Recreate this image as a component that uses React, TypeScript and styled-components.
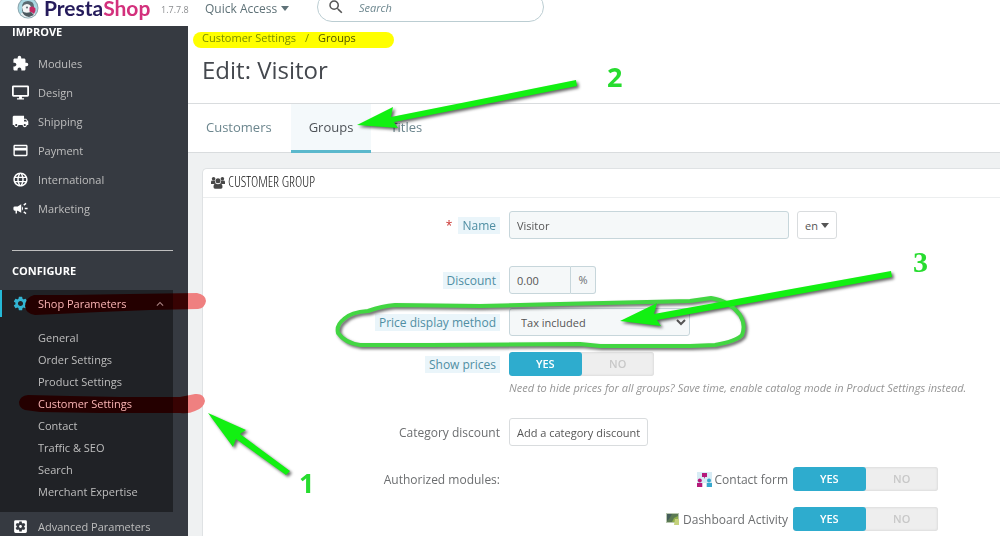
import React from 'react';
import styled, { createGlobalStyle } from 'styled-components';
import { MdExtension, MdLocalShipping, MdCreditCard, MdLanguage, MdSettings, MdSettingsApplications, MdSearch, MdExpandLess } from 'react-icons/md';

const GlobalStyle = createGlobalStyle`
  *, *::before, *::after { box-sizing: border-box; }
  body { margin: 0; overflow: hidden; background: #fff; }
  body, button, input, select { font-family: 'Open Sans', sans-serif; font-size: 12px; }
  a { color: inherit; text-decoration: none; }
  ul { list-style: none; margin: 0; padding: 0; }
`;

const Page = styled.div`
  position: relative;
  min-height: 100vh;
  max-height: 100vh;
  overflow: hidden;
  isolation: isolate;
  color: #6c6e70;
`;

const TopBar = styled.header`
  display: flex;
  align-items: flex-start;
  height: 26px;
  padding-left: 17px;
`;

const Brand = styled.a`
  display: flex;
  gap: 5px;
  width: 144px;
  font: 700 21px/16px Lato, sans-serif;
  color: #251b5b;
  svg { flex: none; margin-top: -3px; }
`;

const Shop = styled.span`
  color: #d3307c;
`;

const Version = styled.span`
  width: 44px;
  font-size: 9px;
  line-height: 20px;
  color: #8a8c8f;
`;

const QuickAccess = styled.button`
  display: flex;
  align-items: center;
  gap: 4px;
  width: 112px;
  height: 16px;
  padding: 0;
  border: 0;
  background: none;
  color: #5f7278;
`;

const SearchBox = styled.label`
  display: flex;
  align-items: center;
  gap: 14px;
  width: 227px;
  height: 30px;
  margin-top: -8px;
  padding: 0 9px;
  border: 1px solid #bbcdd2;
  border-radius: 15px;
  svg { flex: none; color: #555; }
  input {
    width: 100%;
    padding: 0;
    border: 0;
    outline: 0;
    background: none;
    font-size: 11px;
    font-style: italic;
  }
  input::placeholder { color: #6c868e; opacity: 1; }
`;

const Body = styled.div`
  display: flex;
  align-items: stretch;
`;

const Sidebar = styled.nav`
  flex: none;
  width: 188px;
  min-height: calc(100vh - 26px);
  font-size: 11px;
  background: #363a41;
  color: #bebebe;
`;

const SectionTitle = styled.h2`
  margin: 0;
  padding-left: 12px;
  font-size: 11px;
  font-weight: 700;
  line-height: 12px;
  color: #fff;
`;

const MainMenu = styled.ul`
  padding-top: 11px;
`;

const MenuLink = styled.a`
  display: flex;
  align-items: center;
  gap: 9px;
  height: 29px;
  padding-left: 12px;
  svg { flex: none; color: #fff; }
`;

const Divider = styled.hr`
  width: 161px;
  height: 1px;
  margin: 27px 0 14px 12px;
  border: 0;
  background: #bebebe;
`;

const OpenGroup = styled.div`
  width: 173px;
  height: 222px;
  margin-top: 13px;
  background: #202226;
`;

const OpenLink = styled(MenuLink)`
  height: 27px;
  padding-left: 10px;
  border-left: 2px solid #25b9d7;
  & > svg:first-child { color: #33b5d3; }
`;

const Marked = styled.span`
  position: relative;
  z-index: 2;
  flex: 1;
  color: #fbb4b4;
`;

const GroupArrow = styled.span`
  position: relative;
  z-index: 2;
  display: flex;
  padding-right: 6px;
  && svg { color: #a98080; }
`;

const SubMenu = styled.ul`
  padding: 10px 0 0 38px;
`;

const SubItem = styled.li`
  height: 22px;
  line-height: 22px;
`;

const Main = styled.main`
  flex: 1;
  min-width: 0;
  background: #eff1f2;
`;

const PageHead = styled.div`
  height: 127px;
  background: #fff;
  border-bottom: 1px solid #d9dcde;
`;

const Breadcrumb = styled.nav`
  display: flex;
  gap: 9px;
  height: 26px;
  padding: 4px 0 0 14px;
  font-size: 11px;
  line-height: 16px;
  color: #7b8f78;
  span { color: #50535a; }
`;

const Title = styled.h1`
  margin: 0;
  padding: 1px 0 0 14px;
  height: 51px;
  font-size: 24px;
  font-weight: 400;
  line-height: 34px;
  color: #44484e;
`;

const Tabs = styled.div`
  display: flex;
  gap: 1px;
  border-top: 1px solid #d9dcde;
`;

const Tab = styled.a<{ $active?: boolean }>`
  height: 49px;
  padding: 0 18px;
  font-size: 13px;
  line-height: 47px;
  color: ${p => (p.$active ? '#4d5257' : '#6c868e')};
  background: ${p => (p.$active ? '#f4f9fb' : 'transparent')};
  border-bottom: 3px solid ${p => (p.$active ? '#5bb8cc' : 'transparent')};
`;

const Panel = styled.section`
  margin: 15px 0 0 14px;
  min-height: 400px;
  background: #fff;
  border: 1px solid #dfe2e4;
  border-right: 0;
  border-top-left-radius: 5px;
`;

const PanelTitle = styled.h3`
  display: flex;
  align-items: center;
  gap: 3px;
  height: 29px;
  margin: 0 0 13px;
  padding: 0 0 2px 8px;
  border-bottom: 1px solid #eceeef;
  font: 300 14px/26px 'Open Sans Condensed Light', 'Open Sans Condensed', 'Open Sans', sans-serif;
  color: #111;
`;

const Row = styled.div<{ $gap?: number }>`
  display: grid;
  grid-template-columns: 297px 1fr;
  align-items: start;
  column-gap: 9px;
  margin-bottom: ${p => p.$gap ?? 14}px;
`;

const LabelCell = styled.div<{ $low?: boolean }>`
  display: flex;
  justify-content: flex-end;
  align-items: center;
  gap: 6px;
  height: ${p => (p.$low ? 24 : 28)}px;
`;

const Label = styled.label<{ $hint?: boolean }>`
  padding: 0 ${p => (p.$hint ? 4 : 0)}px;
  line-height: 17px;
  color: ${p => (p.$hint ? '#4f8ea3' : '#6c6e70')};
  background: ${p => (p.$hint ? '#eaf5fa' : 'transparent')};
`;

const Star = styled.span`
  color: #c9302c;
`;

const Fields = styled.div`
  display: flex;
  flex-wrap: wrap;
  column-gap: 8px;
`;

const TextInput = styled.input<{ $width: number }>`
  width: ${p => p.$width}px;
  height: 28px;
  padding: 0 7px;
  font-size: 11px;
  color: #555;
  background: #f5f8f9;
  border: 1px solid #c7d6db;
  border-radius: 3px;
`;

const InputGroup = styled.div`
  display: flex;
  input { border-radius: 3px 0 0 3px; }
`;

const Unit = styled.span`
  width: 25px;
  height: 28px;
  font-size: 11px;
  line-height: 26px;
  text-align: center;
  background: #f5f8f9;
  border: 1px solid #c7d6db;
  border-left: 0;
  border-radius: 0 3px 3px 0;
`;

const PlainButton = styled.button`
  display: flex;
  align-items: center;
  gap: 3px;
  height: 28px;
  padding: 0 7px;
  font-size: 11px;
  color: #555;
  background: #fff;
  border: 1px solid #d9dcde;
  border-radius: 3px;
`;

const Select = styled.select`
  width: 181px;
  height: 28px;
  padding: 0 0 0 7px;
  font-size: 11px;
  color: #555;
  background: #f5f8f9;
  border: 1px solid #c7d6db;
  border-radius: 3px;
`;

const Switch = styled.div`
  display: flex;
  width: 145px;
  height: 24px;
  background: #eee;
  border-radius: 3px;
  box-shadow: inset 0 0 2px 1px #ddd;
  overflow: hidden;
`;

const Choice = styled.label`
  flex: 1;
  font-size: 11px;
  font-weight: 600;
  line-height: 24px;
  text-align: center;
  color: #c8c8c8;
  border-radius: 3px;
  input { position: absolute; opacity: 0; pointer-events: none; }
  &:has(input:checked) { background: #2eacce; color: #fff; }
`;

const Help = styled.p`
  width: 100%;
  margin: 0;
  padding-top: 3px;
  font-size: 11px;
  font-style: italic;
  line-height: 17px;
  color: #959595;
`;

const Modules = styled.ul`
  width: 429px;
  margin-top: 2px;
`;

const ModuleItem = styled.li`
  display: flex;
  justify-content: flex-end;
  align-items: center;
  height: 24px;
  margin-bottom: 16px;
`;

const ModuleName = styled.span`
  display: flex;
  align-items: center;
  gap: 3px;
  padding-right: 5px;
`;

const Overlay = styled.svg`
  position: absolute;
  z-index: 1;
  top: 0;
  left: 0;
  pointer-events: none;
`;

const Blended = styled(Overlay)`
  mix-blend-mode: multiply;
`;

const Front = styled(Overlay)`
  z-index: 3;
  text { font-weight: 700; fill: #27dc2f; }
`;

const Caret = () => (
  <svg width="8" height="5" viewBox="0 0 8 5" fill="currentColor"><path d="M0 0H8L4 5Z" /></svg>
);

const Puffin = () => (
  <svg width="22" height="22" viewBox="0 0 22 22">
    <defs><clipPath id="disc"><circle cx="11" cy="11" r="9.5" /></clipPath></defs>
    <circle cx="11" cy="11" r="10.5" fill="#8fa9b1" />
    <g clipPath="url(#disc)">
      <circle cx="11" cy="11" r="10" fill="#a9d8e2" />
      <path d="M5 14L5 10Q5 4 11 4Q17 4 17 10L17 14Z" fill="#5b6a70" />
      <path d="M5 10Q8 6 12 7.5Q15 9 14 15Q9 18 6 14Z" fill="#f4f6f6" />
      <path d="M2 22Q3 15 7 15L11 18L18 16V22Z" fill="#e8eef0" />
      <path d="M5 14Q8 17 14 15L17 18L12 20Q6 19 5 14Z" fill="#4c595f" />
      <path d="M12.5 10.5Q16 8 18.5 11.5Q19 14 17 17Q15.5 15 12.5 14.5Z" fill="#c22b64" />
      <circle cx="10" cy="10.5" r="1.1" fill="#6c787d" />
    </g>
  </svg>
);

const Monitor = () => (
  <svg width="17" height="17" viewBox="0 0 24 24" fill="#fff" fillRule="evenodd">
    <path d="M2 2H22Q24 2 24 4V16Q24 18 22 18H14V20H17V22H7V20H10V18H2Q0 18 0 16V4Q0 2 2 2ZM2.5 4.5V15.5H21.5V4.5Z" />
  </svg>
);

const Megaphone = () => (
  <svg width="17" height="17" viewBox="0 0 24 24" fill="currentColor">
    <path d="M18 11v2h4v-2h-4zm-2 6.61c.96.71 2.21 1.65 3.2 2.39l1.2-1.6-3.2-2.4-1.2 1.61zM20.4 5.6 19.2 4l-3.2 2.4 1.2 1.6 3.2-2.4zM4 9a2 2 0 0 0-2 2v2a2 2 0 0 0 2 2h1v4h2v-4h1l5 3V6L8 9H4zm11.5 3a4.5 4.5 0 0 0-1.5-3.35v6.69A4.5 4.5 0 0 0 15.5 12z" />
  </svg>
);

const People = () => (
  <svg width="14" height="13" viewBox="0 0 14 13" fill="#484848">
    <circle cx="2.6" cy="2.7" r="1.8" /><circle cx="11.4" cy="2.7" r="1.8" />
    <path d="M0 8V6Q0 4.6 1.4 4.6H4Q3.5 6.5 5 7.3L3.5 8ZM14 8V6Q14 4.6 12.6 4.6H10Q10.5 6.5 9 7.3L10.5 8Z" />
    <circle cx="7" cy="4.8" r="2.5" />
    <path d="M2.5 11Q2.5 7.6 4.8 7.4Q7 9 9.2 7.4Q11.5 7.6 11.5 11Q11.5 12.8 10 12.8H4Q2.5 12.8 2.5 11Z" />
  </svg>
);

const ContactIcon = () => (
  <svg width="15" height="15" viewBox="0 0 15 15">
    <rect width="15" height="15" fill="#d8ecf5" />
    <path d="M5 1H10V5H8L7 7V5H5Z" fill="#b5197a" />
    <circle cx="2.8" cy="8.5" r="2" fill="#b5197a" /><path d="M0 15V11H5.5V15Z" fill="#b5197a" />
    <circle cx="12" cy="8.5" r="2" fill="#38a8cd" /><path d="M9.5 15V11H15V15Z" fill="#38a8cd" />
    <path d="M5.5 11H9.5V15H5.5Z" fill="#fff" />
  </svg>
);

const ActivityIcon = () => (
  <svg width="14" height="12" viewBox="0 0 14 12">
    <rect width="13" height="10" fill="#b9c7b0" />
    <rect x="1" y="1" width="11" height="8" fill="#5b7a52" />
    <path d="M1 1H6L3 6L1 8Z" fill="#445d5a" />
    <path d="M6 9L8 5L12 3V9Z" fill="#8fae4a" />
    <path d="M9 6H13V12H8Z" fill="#c5d27c" />
  </svg>
);

const menu = [
  { name: 'Modules', Icon: MdExtension },
  { name: 'Design', Icon: Monitor },
  { name: 'Shipping', Icon: MdLocalShipping },
  { name: 'Payment', Icon: MdCreditCard },
  { name: 'International', Icon: MdLanguage },
  { name: 'Marketing', Icon: Megaphone },
];

const subMenu = ['General', 'Order Settings', 'Product Settings', 'Customer Settings', 'Contact', 'Traffic & SEO', 'Search', 'Merchant Expertise'];

const YesNo = ({ name }: { name: string }) => (
  <Switch role="radiogroup" aria-label={name}>
    <Choice><input type="radio" name={name} defaultChecked />YES</Choice>
    <Choice><input type="radio" name={name} />NO</Choice>
  </Switch>
);

const Annotations = () => (
  <>
    <Blended width="1000" height="536">
      <rect x="193" y="32" width="201" height="16" rx="8" fill="#ffff00" />
    </Blended>
    <Overlay width="1000" height="536">
      <defs>
        <linearGradient id="marker" gradientUnits="userSpaceOnUse" x1="0" x2="376" y1="0" y2="0">
          <stop offset="0.46" stopColor="#240000" />
          <stop offset="0.46" stopColor="#380303" />
          <stop offset="0.5" stopColor="#380303" />
          <stop offset="0.5" stopColor="#ef8080" />
        </linearGradient>
      </defs>
      <path d="M34 295H70L130 294L197 293Q206 295 206 301Q205 308 198 309L150 310L100 312L35 315Q26 314 25 306Q26 297 34 295Z" fill="url(#marker)" />
      <path d="M28 395L70 396L120 397L180 397L195 394Q204 393 205 401Q204 408 195 411Q189 414 180 413H100L40 412L25 410Q19 408 19 402Q20 396 28 395Z" fill="url(#marker)" />
    </Overlay>
    <Front width="1000" height="536">
      <defs>
        <filter id="shade" x="-10%" y="-20%" width="120%" height="150%" colorInterpolationFilters="sRGB">
          <feDropShadow dx="2" dy="2" stdDeviation="1.5" floodColor="#000" floodOpacity="0.6" />
        </filter>
      </defs>
      <g filter="url(#shade)" fill="#12f012">
        <path d="M395 305L480 306L560 304L690 301L711 298Q730 301 740 315Q746 325 742 335Q737 341 715 345L690 346H600L580 344L430 345H360Q345 343 338 333Q336 325 344 319Q351 312 368 311Q382 306 395 305Z" fill="none" stroke="#42d642" strokeWidth="4" strokeLinejoin="round" />
        <path d="M357 125L393 107L391 117L576 80L577 86L394 122L398 128Z" />
        <path d="M208 413L246 430L240 434L290 471L286 475L236 439L233 447Z" />
        <path d="M620 321L657 303L654 314L891 271L892 277L657 320L661 326Z" />
      </g>
      <text x="607" y="87" fontSize="27" fontFamily="Open Sans">2</text>
      <text x="299" y="493" fontSize="27" fontFamily="Open Sans">1</text>
      <text x="913" y="272" fontSize="30" fontFamily="Liberation Serif">3</text>
    </Front>
  </>
);

export default function App() {
  return (
    <>
      <GlobalStyle />
      <Page>
        <TopBar>
          <Brand href="#"><Puffin /><span>Presta<Shop>Shop</Shop></span></Brand>
          <Version>1.7.7.8</Version>
          <QuickAccess>Quick Access <Caret /></QuickAccess>
          <SearchBox><MdSearch size={18} /><input placeholder="Search" aria-label="Search" /></SearchBox>
        </TopBar>
        <Body>
          <Sidebar>
            <SectionTitle>IMPROVE</SectionTitle>
            <MainMenu>
              {menu.map(({ name, Icon }) => (
                <li key={name}><MenuLink href="#"><Icon size={17} />{name}</MenuLink></li>
              ))}
            </MainMenu>
            <Divider />
            <SectionTitle>CONFIGURE</SectionTitle>
            <OpenGroup>
              <OpenLink href="#">
                <MdSettings size={17} /><Marked>Shop Parameters</Marked>
                <GroupArrow><MdExpandLess size={14} /></GroupArrow>
              </OpenLink>
              <SubMenu>
                {subMenu.map(item => (
                  <SubItem key={item}><a href="#">{item === 'Customer Settings' ? <Marked>{item}</Marked> : item}</a></SubItem>
                ))}
              </SubMenu>
            </OpenGroup>
            <MenuLink href="#"><MdSettingsApplications size={17} />Advanced Parameters</MenuLink>
          </Sidebar>
          <Main>
            <PageHead>
              <Breadcrumb><a href="#">Customer Settings</a>/<span>Groups</span></Breadcrumb>
              <Title>Edit: Visitor</Title>
              <Tabs>
                <Tab href="#">Customers</Tab>
                <Tab href="#" $active>Groups</Tab>
                <Tab href="#">Titles</Tab>
              </Tabs>
            </PageHead>
            <Panel>
              <PanelTitle><People />CUSTOMER GROUP</PanelTitle>
              <Row $gap={27}>
                <LabelCell><Star>*</Star><Label $hint htmlFor="name">Name</Label></LabelCell>
                <Fields>
                  <TextInput id="name" $width={280} defaultValue="Visitor" />
                  <PlainButton>en <Caret /></PlainButton>
                </Fields>
              </Row>
              <Row>
                <LabelCell><Label $hint htmlFor="discount">Discount</Label></LabelCell>
                <InputGroup><TextInput id="discount" $width={62} defaultValue="0.00" /><Unit>%</Unit></InputGroup>
              </Row>
              <Row $gap={16}>
                <LabelCell><Label $hint htmlFor="method">Price display method</Label></LabelCell>
                <Fields><Select id="method"><option>Tax included</option></Select></Fields>
              </Row>
              <Row $gap={22}>
                <LabelCell $low><Label $hint as="span">Show prices</Label></LabelCell>
                <Fields>
                  <YesNo name="Show prices" />
                  <Help>Need to hide prices for all groups? Save time, enable catalog mode in Product Settings instead.</Help>
                </Fields>
              </Row>
              <Row $gap={19}>
                <LabelCell><Label as="span">Category discount</Label></LabelCell>
                <Fields><PlainButton>Add a category discount</PlainButton></Fields>
              </Row>
              <Row>
                <LabelCell><Label as="span">Authorized modules:</Label></LabelCell>
                <Modules>
                  <ModuleItem><ModuleName><ContactIcon />Contact form</ModuleName><YesNo name="Contact form" /></ModuleItem>
                  <ModuleItem><ModuleName><ActivityIcon />Dashboard Activity</ModuleName><YesNo name="Dashboard Activity" /></ModuleItem>
                </Modules>
              </Row>
            </Panel>
          </Main>
        </Body>
        <Annotations />
      </Page>
    </>
  );
}
